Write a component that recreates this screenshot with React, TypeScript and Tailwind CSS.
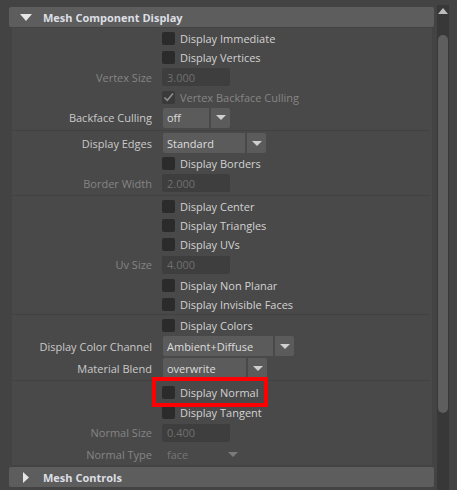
import type { ReactNode } from "react";

const ui = "font-['Open_Sans',sans-serif] text-[11px] leading-none";

const Arrow = ({ color = "#cfcfcf" }: { color?: string }) => (
  <svg width="10" height="5" viewBox="0 0 10 5">
    <polygon points="0,0 10,0 5,5" fill={color} />
  </svg>
);

const Checkbox = ({ checked, disabled }: { checked?: boolean; disabled?: boolean }) => (
  <div
    className={`w-[13px] h-[13px] rounded-[2px] flex items-center justify-center ${
      disabled ? "bg-[#3a3a3a]" : "bg-[#2b2b2b]"
    }`}
  >
    {checked && (
      <svg width="11" height="10" viewBox="0 0 11 10">
        <path d="M1.5 5.5 L4.3 8.3 L10 1.5" stroke="#8e8e8e" strokeWidth="1.6" fill="none" />
      </svg>
    )}
  </div>
);

const Row = ({
  h,
  label,
  disabled,
  children,
}: {
  h: string;
  label?: string;
  disabled?: boolean;
  children: ReactNode;
}) => (
  <div className={`flex items-center ${h}`}>
    <div className={`w-[141px] pr-[1px] text-right ${disabled ? "text-[#858585]" : "text-[#c9c9c9]"}`}>
      {label}
    </div>
    <div className="ml-[9px] flex items-center">{children}</div>
  </div>
);

const CheckRow = ({ h, text, checked, disabled }: { h: string; text: string; checked?: boolean; disabled?: boolean }) => (
  <Row h={h}>
    <Checkbox checked={checked} disabled={disabled} />
    <span className={`ml-[5px] ${disabled ? "text-[#858585]" : "text-[#d2d2d2]"}`}>{text}</span>
  </Row>
);

const Field = ({ value }: { value: string }) => (
  <div className="w-[68px] h-[18px] rounded-[2px] bg-[#3e3e3e] flex items-center pl-[5px] text-[#6f6f6f]">
    {value}
  </div>
);

const Dropdown = ({ value, main, disabled }: { value: string; main: string; disabled?: boolean }) => (
  <div className="ml-[1px] flex h-[20px] gap-[2px]">
    <div
      className={`${main} flex items-center pl-[4px] rounded-l-[2px] ${
        disabled ? "text-[#767676]" : "bg-[#5b5b5b] text-[#dedede]"
      }`}
    >
      {value}
    </div>
    <div
      className={`w-[19px] flex items-center justify-center rounded-r-[2px] ${disabled ? "" : "bg-[#5b5b5b]"}`}
    >
      <Arrow color={disabled ? "#7a7a7a" : "#cfcfcf"} />
    </div>
  </div>
);

const Separator = ({ className }: { className: string }) => (
  <div className={`${className} mx-[1px] mr-[2px] h-px bg-[#414141]`} />
);

const Header = ({ title, open }: { title: string; open?: boolean }) => (
  <div className="h-[20px] rounded-[2px] bg-[#5d5d5d] flex items-center">
    <div className="w-[34px] flex justify-center">
      {open ? (
        <svg width="12" height="7" viewBox="0 0 12 7">
          <polygon points="0,0 12,0 6,7" fill="#e6e6e6" />
        </svg>
      ) : (
        <svg width="6" height="11" viewBox="0 0 6 11">
          <polygon points="0,0 6,5.5 0,11" fill="#e6e6e6" />
        </svg>
      )}
    </div>
    <span className="font-bold text-[#dcdfe4]">{title}</span>
  </div>
);

export default function App() {
  return (
    <div className={`${ui} w-[457px] h-[490px] bg-[#434343] flex overflow-hidden`}>
      <div className="w-[425px] ml-[9px] pt-[7px] flex flex-col">
        <Header title="Mesh Component Display" open />
        <div className="ml-[3px] mr-[2px] mt-[1px] bg-[#494949] flex flex-col">
          <CheckRow h="h-[20px]" text="Display Immediate" />
          <CheckRow h="h-[19px]" text="Display Vertices" />
          <Row h="h-[20px]" label="Vertex Size" disabled>
            <Field value="3.000" />
          </Row>
          <CheckRow h="h-[20px]" text="Vertex Backface Culling" checked disabled />
          <Row h="h-[21px]" label="Backface Culling">
            <Dropdown value="off" main="w-[46px]" />
          </Row>
          <Separator className="mt-[2px] mb-[2px]" />
          <Row h="h-[20px]" label="Display Edges">
            <Dropdown value="Standard" main="w-[82px]" />
          </Row>
          <CheckRow h="h-[20px]" text="Display Borders" />
          <Row h="h-[20px]" label="Border Width" disabled>
            <Field value="2.000" />
          </Row>
          <Separator className="mt-[2px] mb-[1px]" />
          <CheckRow h="h-[19px]" text="Display Center" />
          <CheckRow h="h-[19px]" text="Display Triangles" />
          <CheckRow h="h-[19px]" text="Display UVs" />
          <Row h="h-[21px]" label="Uv Size" disabled>
            <Field value="4.000" />
          </Row>
          <CheckRow h="h-[20px]" text="Display Non Planar" />
          <CheckRow h="h-[19px]" text="Display Invisible Faces" />
          <Separator className="mb-0" />
          <CheckRow h="h-[20px]" text="Display Colors" />
          <Row h="h-[22px]" label="Display Color Channel">
            <Dropdown value="Ambient+Diffuse" main="w-[110px]" />
          </Row>
          <Row h="h-[22px]" label="Material Blend">
            <Dropdown value="overwrite" main="w-[83px]" />
          </Row>
          <Separator className="mt-[1px] mb-[1px]" />
          <div className="relative">
            <CheckRow h="h-[20px]" text="Display Normal" />
            <div className="absolute left-[140px] top-[-5px] w-[116px] h-[30px] border-[4px] border-[#ff0000]" />
          </div>
          <CheckRow h="h-[20px]" text="Display Tangent" />
          <Row h="h-[21px]" label="Normal Size" disabled>
            <Field value="0.400" />
          </Row>
          <Row h="h-[22px]" label="Normal Type" disabled>
            <Dropdown value="face" main="w-[58px]" disabled />
          </Row>
        </div>
        <div className="mt-[2px]">
          <Header title="Mesh Controls" />
        </div>
      </div>
      <div className="ml-[3px] mt-[5px] w-[12px] bg-[#383838] flex flex-col items-center">
        <div className="mt-[3px]">
          <svg width="10" height="6" viewBox="0 0 10 6">
            <polygon points="5,0 10,6 0,6" fill="#bdbdbd" />
          </svg>
        </div>
        <div className="mt-[21px] w-[10px] h-[378px] rounded-[5px] bg-[#5e5e5e]" />
      </div>
    </div>
  );
}
